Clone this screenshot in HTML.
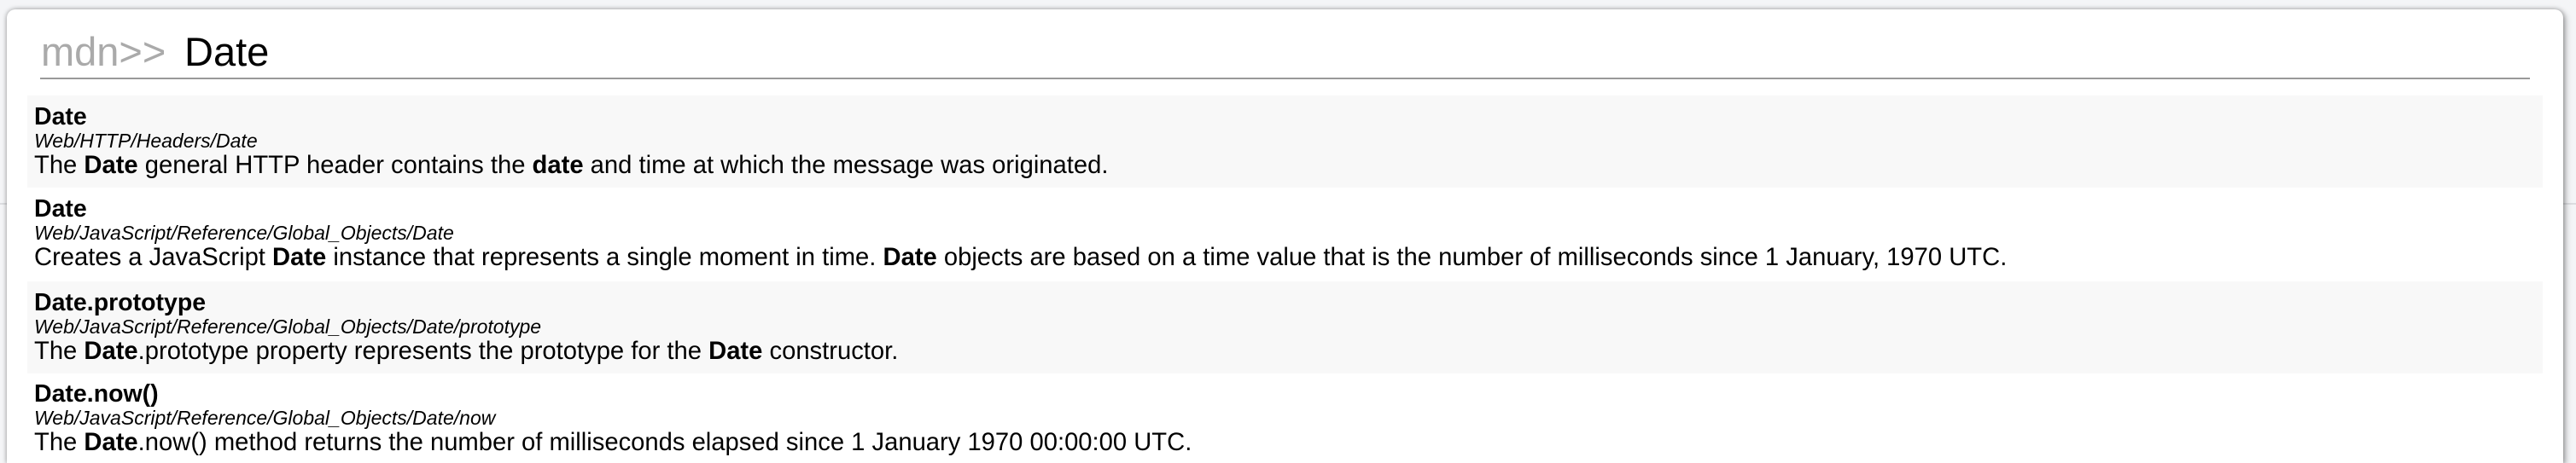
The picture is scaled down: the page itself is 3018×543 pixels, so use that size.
<!DOCTYPE html>
<html><head><meta charset="utf-8"><style>
html,body{margin:0;padding:0;width:3018px;height:543px;overflow:hidden;background:#f4f5f7;font-family:"Liberation Sans",Arial,sans-serif;}
.under{position:absolute;left:0;top:238px;width:3018px;height:2px;background:#dcdde0;}
.panel{position:absolute;left:8px;top:11px;width:2995px;height:532px;background:#fff;border-radius:10px 10px 0 0;box-shadow:0 0 6px rgba(0,0,0,.35),3px 3px 8px rgba(0,0,0,.25);overflow:hidden;}
.hdr{position:absolute;left:40px;top:22px;font-size:47px;line-height:56px;white-space:nowrap;}
.hdr .m{color:#aaa;}
.hdr .d{color:#000;position:absolute;left:168px;top:0;}
.line{position:absolute;left:39px;top:80px;width:2917px;height:2px;background:#999;}
.row{position:absolute;left:24px;width:2947px;height:108px;}
.row.g{background:#f8f8f8;}
.row div{position:absolute;left:8px;white-space:nowrap;color:#000;}
.t{top:9px;font-size:28.5px;font-weight:bold;line-height:32px;}
.p{top:40px;font-size:23px;font-style:italic;line-height:26px;}
.s{top:66px;font-size:29.2px;line-height:32px;}
</style></head><body>
<div class="under"></div>
<div class="panel">
<div class="hdr"><span class="m">mdn&gt;&gt;</span><span class="d">Date</span></div>
<div class="line"></div>
<div class="row g" style="top:101px"><div class="t">Date</div><div class="p">Web/HTTP/Headers/Date</div><div class="s">The <b>Date</b> general HTTP header contains the <b>date</b> and time at which the message was originated.</div></div>
<div class="row" style="top:209px"><div class="t">Date</div><div class="p">Web/JavaScript/Reference/Global_Objects/Date</div><div class="s">Creates a JavaScript <b>Date</b> instance that represents a single moment in time. <b>Date</b> objects are based on a time value that is the number of milliseconds since 1 January, 1970 UTC.</div></div>
<div class="row g" style="top:319px"><div class="t">Date.prototype</div><div class="p">Web/JavaScript/Reference/Global_Objects/Date/prototype</div><div class="s">The <b>Date</b>.prototype property represents the prototype for the <b>Date</b> constructor.</div></div>
<div class="row" style="top:426px"><div class="t">Date.now()</div><div class="p">Web/JavaScript/Reference/Global_Objects/Date/now</div><div class="s">The <b>Date</b>.now() method returns the number of milliseconds elapsed since 1 January 1970 00:00:00 UTC.</div></div>
</div>
</body></html>
